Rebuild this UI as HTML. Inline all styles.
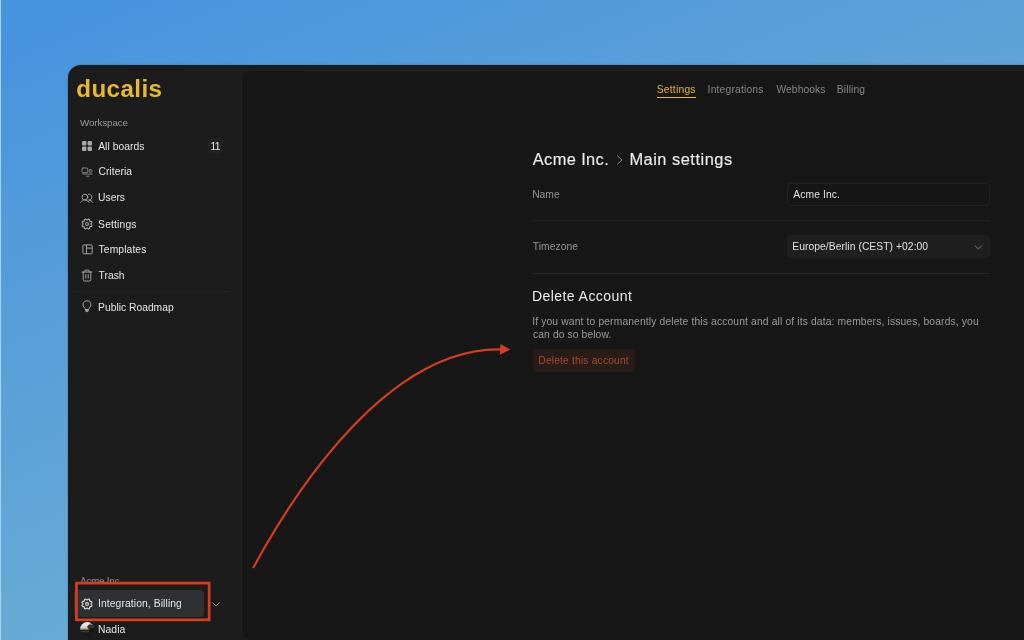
<!DOCTYPE html>
<html lang="en">
<head>
<meta charset="utf-8">
<title>Ducalis – Main settings</title>
<style>
*{box-sizing:border-box;margin:0;padding:0}
html,body{width:1024px;height:640px;overflow:hidden}
body{position:relative;font-family:"Liberation Sans",sans-serif;background:linear-gradient(158deg,#4593df 0%,#7db9cf 100%);color:#e4e4e4;-webkit-font-smoothing:antialiased}
.abs{position:absolute}
.t{position:absolute;white-space:nowrap;line-height:1}
.edge{position:absolute;left:0;top:0;width:1px;height:640px;background:#b0cfe8}
.window{position:absolute;left:68px;top:65px;width:980px;height:600px;background:#1c1c1c;border-top-left-radius:13px;box-shadow:0 0 2px rgba(0,0,0,.3)}
.main{position:absolute;left:241px;top:70px;width:820px;height:571px;background:#171717;border:1px solid #232122;border-radius:9px}
.logo{font-size:24.2px;font-weight:bold;color:#e9b833;letter-spacing:0}
.lbl{color:#9b9b9b;font-size:9.8px}
.nav{font-size:10.3px;color:#e6e6e6}
.ico{position:absolute;overflow:visible}
.sep{position:absolute;height:1px;background:#272425}
.badge{position:absolute;left:208px;top:138.300px;width:15px;height:15.500px;background:#232021;border-radius:3px}
.btn{position:absolute;left:74px;top:590.4px;width:130.2px;height:26.2px;background:#2f3031;border-radius:4px}
.redbox{position:absolute;left:75.1px;top:581.8px;width:135.4px;height:39.4px;border:2.7px solid #d63e20}
.tab{font-size:10.3px;color:#868686}
.tab.on{color:#e3b432}
.uline{position:absolute;left:657px;top:96.5px;width:39px;height:1.6px;background:#ebba34}
.h1{font-size:16.4px;color:#ececec;-webkit-text-stroke:.15px #ececec}
.flabel{font-size:10.3px;color:#939393}
.input{position:absolute;left:787px;top:183px;width:203px;height:23px;border:1px solid #222222;border-radius:4px;background:#161616}
.select{position:absolute;left:787px;top:235px;width:203px;height:23px;border-radius:4px;background:#1f1f1f}
.fval{font-size:10.3px;color:#e2e2e2}
.hsep{position:absolute;left:533px;width:457px;height:1px;background:#242424}
.h2{font-size:14px;color:#ececec}
.p{font-size:10.3px;color:#9a9a9a}
.del{position:absolute;left:533px;top:349px;width:102.3px;height:22.8px;border-radius:4px;background:#281d19}
.deltxt{font-size:10.3px;color:#a84a2a}
</style>
</head>
<body>
<div id="root" style="position:absolute;left:0;top:0;width:1024px;height:640px;will-change:transform">
<div class="edge"></div>
<div class="window"></div>
<div class="main"></div>

<!-- sidebar -->
<div class="t logo" id="logo" style="left:76.20px;top:76.80px;letter-spacing:0.420px">ducalis</div>
<div class="t lbl" id="ws" style="left:80.00px;top:117.50px;letter-spacing:-0.100px">Workspace</div>

<svg class="ico" style="left:82px;top:141px" width="10" height="10" viewBox="0 0 10 10"><g fill="#a8a8a8"><rect x="0" y="0" width="4.400" height="4.400" rx="1"/><rect x="5.600" y="0" width="4.400" height="4.400" rx="1"/><rect x="0" y="5.600" width="4.400" height="4.400" rx="1"/><rect x="5.600" y="5.600" width="4.400" height="4.400" rx="1"/></g></svg>
<div class="t nav" id="n1" style="left:98.20px;top:142.10px;letter-spacing:0.043px">All boards</div>
<div class="badge"></div>
<div class="t nav" id="b11" style="left:210.60px;top:142.10px;letter-spacing:-0.700px;font-size:10.3px">11</div>

<svg class="ico" style="left:80.5px;top:166.5px" width="12" height="12" viewBox="0 0 12 12" fill="none" stroke="#8e8e8e" stroke-width=".9" stroke-linecap="round"><rect x="1" y="1" width="5.8" height="4.6" rx="1"/><rect x="8.3" y="2.8" width="2.6" height="2.4" rx=".6"/><path d="M1.6 7h9.6M5.6 9.2h2.4"/></svg>
<div class="t nav" id="n2" style="left:98.40px;top:167.10px;letter-spacing:0.058px">Criteria</div>

<svg class="ico" style="left:80px;top:192.5px" width="14" height="11" viewBox="0 0 14 11" fill="none" stroke="#a2a2a2" stroke-width="1" stroke-linecap="round"><circle cx="4.9" cy="4.1" r="2.9"/><path d="M.7 9.4C1.7 7.9 3.2 7 4.9 7s3.2.9 4.2 2.4"/><path d="M8.4 1.3a2.9 2.9 0 1 1 .2 5.7c1.800.1 3.200 1 4.100 2.400"/></svg>
<div class="t nav" id="n3" style="left:98.10px;top:193.30px;letter-spacing:-0.000px">Users</div>

<svg class="ico" style="left:80.6px;top:217.6px" width="12" height="12" viewBox="0 0 12 12" fill="none" stroke="#ababab" stroke-width="1.100" stroke-linejoin="round"><path d="M10.10 6.00L10.09 6.27L10.20 6.55L10.56 6.91L10.89 7.31L10.92 7.67L10.80 7.99L10.66 8.30L10.38 8.53L9.87 8.58L9.36 8.58L9.08 8.70L8.90 8.90L8.70 9.08L8.58 9.36L8.58 9.87L8.53 10.38L8.30 10.66L7.99 10.80L7.67 10.92L7.31 10.89L6.91 10.56L6.55 10.20L6.27 10.09L6.00 10.10L5.73 10.09L5.45 10.20L5.09 10.56L4.69 10.89L4.33 10.92L4.01 10.80L3.70 10.66L3.47 10.38L3.42 9.87L3.42 9.36L3.30 9.08L3.10 8.90L2.92 8.70L2.64 8.58L2.13 8.58L1.62 8.53L1.34 8.30L1.20 7.99L1.08 7.67L1.11 7.31L1.44 6.91L1.80 6.55L1.91 6.27L1.90 6.00L1.91 5.73L1.80 5.45L1.44 5.09L1.11 4.69L1.08 4.33L1.20 4.01L1.34 3.70L1.62 3.47L2.13 3.42L2.64 3.42L2.92 3.30L3.10 3.10L3.30 2.92L3.42 2.64L3.42 2.13L3.47 1.62L3.70 1.34L4.01 1.20L4.33 1.08L4.69 1.11L5.09 1.44L5.45 1.80L5.73 1.91L6.00 1.90L6.27 1.91L6.55 1.80L6.91 1.44L7.31 1.11L7.67 1.08L7.99 1.20L8.30 1.34L8.53 1.62L8.58 2.13L8.58 2.64L8.70 2.92L8.90 3.10L9.08 3.30L9.36 3.42L9.87 3.42L10.38 3.47L10.66 3.70L10.80 4.01L10.92 4.33L10.89 4.69L10.56 5.09L10.20 5.45L10.09 5.73Z"/><circle cx="6" cy="6" r="1.45"/></svg>
<div class="t nav" id="n4" style="left:98.10px;top:220.30px;letter-spacing:0.172px">Settings</div>

<svg class="ico" style="left:81.6px;top:244.1px" width="11" height="11" viewBox="0 0 11 11" fill="none" stroke="#a2a2a2" stroke-width="1"><rect x=".900" y=".900" width="9.300" height="8.900" rx=".9"/><path d="M4.500.900v8.900M4.500 4.100h5.700"/></svg>
<div class="t nav" id="n5" style="left:98.60px;top:244.80px;letter-spacing:0.100px">Templates</div>

<svg class="ico" style="left:81px;top:268.5px" width="12" height="13" viewBox="0 0 12 13" fill="none" stroke="#a2a2a2" stroke-width="1" stroke-linecap="round" stroke-linejoin="round"><path d="M1 3h10M3.800 3V1.600c0-.300.200-.500.500-.500h3.400c.300 0 .500.200.500.500V3M2.200 3.200v7.600c0 .700.500 1.200 1.200 1.200h5.200c.700 0 1.200-.500 1.200-1.200V3.200M4.800 5.600v3.600M7.200 5.600v3.600"/></svg>
<div class="t nav" id="n6" style="left:98.60px;top:271.10px;letter-spacing:-0.000px">Trash</div>

<div class="sep" style="left:73px;top:291px;width:157px"></div>

<svg class="ico" style="left:81px;top:300px" width="12" height="13" viewBox="0 0 12 13" fill="none" stroke="#a2a2a2" stroke-width="1" stroke-linejoin="round"><path d="M5.950.700a4 4 0 0 0-2.500 7.100c.500.500.800 1 .900 1.700h3.200c.100-.700.400-1.200.900-1.700A4 4 0 0 0 5.950.700z"/><path d="M4.500 9.600h2.900l-.5 2h-1.900z" fill="#a2a2a2"/></svg>
<div class="t nav" id="n7" style="left:98.10px;top:303.20px;letter-spacing:-0.001px">Public Roadmap</div>

<div class="t lbl" id="acme" style="left:80.00px;top:576.68px;color:#8a8a8a;font-size:10px;letter-spacing:-0.310px;height:7.400px;overflow:hidden">Acme Inc.</div>
<div class="btn"></div>
<svg class="ico" style="left:80.800px;top:597.700px" width="12" height="12" viewBox="0 0 12 12" fill="none" stroke="#dcdcdc" stroke-width="1.150" stroke-linejoin="round"><path d="M10.10 6.00L10.09 6.27L10.20 6.55L10.56 6.91L10.89 7.31L10.92 7.67L10.80 7.99L10.66 8.30L10.38 8.53L9.87 8.58L9.36 8.58L9.08 8.70L8.90 8.90L8.70 9.08L8.58 9.36L8.58 9.87L8.53 10.38L8.30 10.66L7.99 10.80L7.67 10.92L7.31 10.89L6.91 10.56L6.55 10.20L6.27 10.09L6.00 10.10L5.73 10.09L5.45 10.20L5.09 10.56L4.69 10.89L4.33 10.92L4.01 10.80L3.70 10.66L3.47 10.38L3.42 9.87L3.42 9.36L3.30 9.08L3.10 8.90L2.92 8.70L2.64 8.58L2.13 8.58L1.62 8.53L1.34 8.30L1.20 7.99L1.08 7.67L1.11 7.31L1.44 6.91L1.80 6.55L1.91 6.27L1.90 6.00L1.91 5.73L1.80 5.45L1.44 5.09L1.11 4.69L1.08 4.33L1.20 4.01L1.34 3.70L1.62 3.47L2.13 3.42L2.64 3.42L2.92 3.30L3.10 3.10L3.30 2.92L3.42 2.64L3.42 2.13L3.47 1.62L3.70 1.34L4.01 1.20L4.33 1.08L4.69 1.11L5.09 1.44L5.45 1.80L5.73 1.91L6.00 1.90L6.27 1.91L6.55 1.80L6.91 1.44L7.31 1.11L7.67 1.08L7.99 1.20L8.30 1.34L8.53 1.62L8.58 2.13L8.58 2.64L8.70 2.92L8.90 3.10L9.08 3.30L9.36 3.42L9.87 3.42L10.38 3.47L10.66 3.70L10.80 4.01L10.92 4.33L10.89 4.69L10.56 5.09L10.20 5.45L10.09 5.73Z"/><circle cx="6" cy="6" r="1.45"/></svg>
<div class="t nav" id="ib" style="left:98.00px;top:598.90px;letter-spacing:0.104px">Integration, Billing</div>
<svg class="ico" style="left:0;top:0" width="260" height="640" viewBox="0 0 260 640"><rect x="76.450" y="583.100" width="132.700" height="36.750" fill="none" stroke="#d63e20" stroke-width="2.700"/></svg>
<svg class="ico" style="left:212px;top:601.700px" width="9" height="5" viewBox="0 0 9 5" fill="none" stroke="#959595" stroke-width="1" stroke-linecap="round" stroke-linejoin="round"><path d="M.6.600 4.050 4 7.500.600"/></svg>

<svg class="ico" style="left:79.500px;top:622px" width="14.4" height="14.4" viewBox="0 0 14.4 14.4"><defs><filter id="avb" x="-20%" y="-20%" width="140%" height="140%"><feGaussianBlur stdDeviation=".450"/></filter><clipPath id="avc"><circle cx="7.200" cy="7.200" r="7.100"/></clipPath><linearGradient id="avg" x1="0" y1="0" x2="0" y2="1"><stop offset="0" stop-color="#f2f2f2"/><stop offset=".7" stop-color="#d4d4d4"/><stop offset="1" stop-color="#8a8a8a"/></linearGradient></defs><g clip-path="url(#avc)"><g filter="url(#avb)"><rect width="14.400" height="14.400" fill="#141414"/><path d="M0 7.700V0h12.300L7.800 4.400 7.500 7.700z" fill="url(#avg)"/><path d="M11.500 0 14.400 0V6.500L12.600 3.200 9.200 2.600z" fill="#9c9c9c"/><path d="M7.500 4.200 9.300 2.500 12.600 3.200 14 6.200 7.300 7.300z" fill="#2e2e2e"/><rect x="0" y="8.800" width="9" height="1.700" fill="#3d3d3d"/><rect x="0" y="10.500" width="14.400" height="1" fill="#222"/><circle cx="7.300" cy="6.500" r="1.100" fill="#e6b323"/><circle cx="8.700" cy="7.300" r="1" fill="#8c3a17"/></g></g></svg>
<div class="t nav" id="nadia" style="left:98.00px;top:624.60px;letter-spacing:0.100px">Nadia</div>

<!-- main -->
<div class="t tab on" id="t1" style="left:656.70px;top:85.10px;letter-spacing:0.229px">Settings</div>
<div class="uline"></div>
<div class="t tab" id="t2" style="left:707.60px;top:85.10px;letter-spacing:0.182px">Integrations</div>
<div class="t tab" id="t3" style="left:776.50px;top:85.10px;letter-spacing:0.057px">Webhooks</div>
<div class="t tab" id="t4" style="left:836.80px;top:85.10px;letter-spacing:0.136px">Billing</div>

<div class="t h1" id="h1a" style="left:532.80px;top:150.90px;letter-spacing:0.380px">Acme Inc.</div>
<svg class="ico" style="left:615.5px;top:154.500px" width="8" height="10" viewBox="0 0 8 10" fill="none" stroke="#8a8a8a" stroke-width="1" stroke-linecap="round" stroke-linejoin="round"><path d="M1.600 1 6 5 1.600 9"/></svg>
<div class="t h1" id="h1b" style="left:629.40px;top:150.90px;letter-spacing:0.510px">Main settings</div>

<div class="t flabel" id="f1" style="left:532.20px;top:189.70px;letter-spacing:-0.002px">Name</div>
<div class="input"></div>
<div class="t fval" id="v1" style="left:793.30px;top:189.80px;letter-spacing:0.100px">Acme Inc.</div>
<div class="hsep" style="top:220px"></div>

<div class="t flabel" id="f2" style="left:532.80px;top:242.40px;letter-spacing:0.059px">Timezone</div>
<div class="select"></div>
<div class="t fval" id="v2" style="left:792.30px;top:242.30px;letter-spacing:0.060px">Europe/Berlin (CEST) +02:00</div>
<svg class="ico" style="left:974px;top:244.500px" width="9" height="5" viewBox="0 0 9 5" fill="none" stroke="#7c7c7c" stroke-width="1" stroke-linecap="round" stroke-linejoin="round"><path d="M1.100.900 4.300 3.900 7.500.900"/></svg>
<div class="hsep" style="top:272.500px"></div>

<div class="t h2" id="h2" style="left:532.00px;top:289.10px;letter-spacing:0.433px">Delete Account</div>
<div class="t p" id="p1" style="left:532.20px;top:316.90px;letter-spacing:0.139px">If you want to permanently delete this account and all of its data: members, issues, boards, you</div>
<div class="t p" id="p2" style="left:533.00px;top:329.90px;letter-spacing:0.104px">can do so below.</div>
<div class="del"></div>
<div class="t deltxt" id="dt" style="left:538.30px;top:355.70px;letter-spacing:0.157px">Delete this account</div>

<!-- annotation arrow -->
<svg class="ico" style="left:0;top:0" width="1024" height="640" viewBox="0 0 1024 640"><path d="M253.100 568.100C297.600 486 389.400 348.200 500 349.400" fill="none" stroke="#d63e20" stroke-width="2.1"/><path d="M500.300 343.900 510.300 349.600 499.800 354.700z" fill="#d63e20"/></svg>
</div>
</body>
</html>
